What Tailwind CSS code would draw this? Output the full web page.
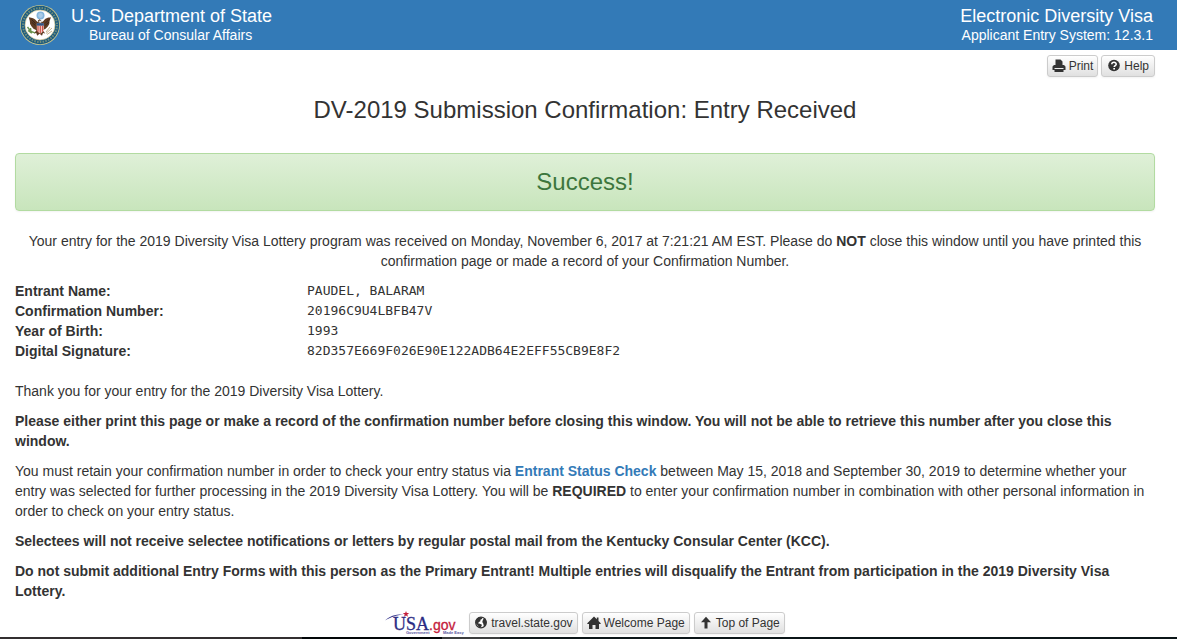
<!DOCTYPE html>
<html lang="en">
<head>
<meta charset="utf-8">
<meta name="viewport" content="width=device-width, initial-scale=1">
<title>DV-2019 Submission Confirmation</title>
<script src="https://cdn.jsdelivr.net/npm/@tailwindcss/browser@4"></script>
</head>
<body class="flex min-h-screen flex-col bg-white font-['Liberation_Sans',Arial,sans-serif] text-sm/5 text-[#333]">
<header id="top" class="flex h-[50px] justify-between bg-[#337ab7] pr-6 pl-5 text-white">
  <div class="flex gap-[11px]">
    <svg class="mt-[5px] size-10" viewBox="0 0 40 40" aria-hidden="true">
      <circle cx="20" cy="20" r="20" fill="#c9c68d"/>
      <circle cx="20" cy="20" r="19.2" fill="#1c5b80"/>
      <circle cx="20" cy="20" r="17" fill="none" stroke="#a9b078" stroke-width="2" stroke-dasharray="1.5 1.3" opacity=".6"/>
      <circle cx="20" cy="20" r="15" fill="#fff" stroke="#d5c98e" stroke-width=".7"/>
      <circle cx="20.500" cy="10.500" r="4" fill="#83b4dc"/>
      <circle cx="20.500" cy="10.500" r="2.400" fill="#a9cbe8"/>
      <path d="M18.600 17.500 16.500 16C14.500 13 12 13 8.800 12.300l1 3.700.3 3 1.500 2.500 1.900 2.200 3 1.600-2.600 3.200 2.300-.4 1 2.700 2.400-2 2.400 2 1-2.700 2.300.4-2.700-3.200 3-1.600 2.200-2.200 1.500-2.500.3-3 1.400-3.700c-3.200.500-5.600.700-7.500 3.700l-2.100 1.500-.2-2-1.600-1.300-1.700 1.300z" fill="#5f3c24"/>
      <path d="m11.500 14.500 4 4M11.600 17l3.800 3.500M29 14.500l-4 4M29 17l-3.800 3.500" stroke="#35221a" stroke-width=".9"/>
      <path d="M19 15.700h2.400l-.4 2h-1.600z" fill="#eee"/>
      <path d="M16.800 18.500h7v5c0 2.600-1.500 4-3.500 5-2-1-3.500-2.400-3.500-5z" fill="#f2c7bd"/>
      <path d="M16.800 18.200h7v2.500h-7z" fill="#2f5486"/>
      <path d="M18 20.700v6M20.300 20.700v7.500M22.600 20.700v6" stroke="#cc4d45" stroke-width="1.100"/>
      <path d="m7.500 22 3 4.200 4.500 1.600M8 25.500l3.800 2.700M10.500 23l.5 4" fill="none" stroke="#69924c" stroke-width="1.400"/>
      <path d="m26 28.500 6-5.500M27 29.500l5-3.500M26 27l4-5" stroke="#b6a071" stroke-width=".8"/>
    </svg>
    <div class="flex flex-col pt-1.5">
      <span class="text-lg/5">U.S. Department of State</span>
      <span class="pl-[18px] text-sm/[18px]">Bureau of Consular Affairs</span>
    </div>
  </div>
  <div class="flex flex-col pt-1.5 text-right">
    <span class="text-lg/5">Electronic Diversity Visa</span>
    <span class="text-sm/[18px]">Applicant Entry System: 12.3.1</span>
  </div>
</header>

<main class="flex flex-1 flex-col pr-[22px] pl-[15px]">
  <div class="flex justify-end gap-[3px] pt-[5px]">
    <button type="button" class="flex h-[22px] items-center gap-[3px] rounded-[3px] border border-[#ccc] bg-linear-to-b from-white to-[#e0e0e0] px-1 text-xs/4 shadow-xs">
      <svg class="size-3.5" viewBox="0 0 14 14" fill="#333" aria-hidden="true"><path fill-rule="evenodd" d="M3.500.5h5L10.500 2.500V6H12l1.500 1.500V11h-2v2h-9v-2h-2V7.500L2 6h1.500zM4.500 1.500V6h5V3H8V1.500zM2.500 9v1h9V9z"/><path d="M4 1h4v2h2v3H4z"/></svg>
      Print
    </button>
    <button type="button" class="flex h-[22px] items-center gap-[3px] rounded-[3px] border border-[#ccc] bg-linear-to-b from-white to-[#e0e0e0] px-[5px] text-xs/4 shadow-xs">
      <svg class="size-3.5" viewBox="0 0 14 14" aria-hidden="true"><circle cx="7" cy="6.500" r="5.800" fill="#333"/><path d="M4.800 5.200C4.800 2.500 9.300 2.700 9.200 5.200 9.200 6.700 7.200 6.700 7.200 8.100" fill="none" stroke="#fff" stroke-width="1.600"/><path d="M6.300 9h1.700v1.600H6.300z" fill="#fff"/></svg>
      Help
    </button>
  </div>

  <h1 class="mt-5 text-center text-2xl/[26px]">DV-2019 Submission Confirmation: Entry Received</h1>

  <div role="status" class="mt-[30px] flex h-[58px] items-center justify-center rounded-sm border border-[#b2dba1] bg-linear-to-b from-[#dff0d8] to-[#c8e5bc] text-2xl/[26px] text-[#3c763d] shadow-xs">Success!</div>

  <p class="mt-5 text-center">Your entry for the 2019 Diversity Visa Lottery program was received on Monday, November 6, 2017 at 7:21:21 AM EST. Please do <strong>NOT</strong> close this window until you have printed this confirmation page or made a record of your Confirmation Number.</p>

  <dl class="mt-2.5 grid grid-cols-[292px_1fr]">
    <dt class="font-bold">Entrant Name:</dt><dd class="font-['DejaVu_Sans_Mono',monospace] text-[13px]/5">PAUDEL, BALARAM</dd>
    <dt class="font-bold">Confirmation Number:</dt><dd class="font-['DejaVu_Sans_Mono',monospace] text-[13px]/5">20196C9U4LBFB47V</dd>
    <dt class="font-bold">Year of Birth:</dt><dd class="font-['DejaVu_Sans_Mono',monospace] text-[13px]/5">1993</dd>
    <dt class="font-bold">Digital Signature:</dt><dd class="font-['DejaVu_Sans_Mono',monospace] text-[13px]/5">82D357E669F026E90E122ADB64E2EFF55CB9E8F2</dd>
  </dl>

  <div class="mt-5 flex flex-col gap-2.5">
    <p>Thank you for your entry for the 2019 Diversity Visa Lottery.</p>
    <p class="font-bold">Please either print this page or make a record of the confirmation number before closing this window. You will not be able to retrieve this number after you close this window.</p>
    <p>You must retain your confirmation number in order to check your entry status via <a href="#" class="font-bold text-[#337ab7]">Entrant Status Check</a> between May 15, 2018 and September 30, 2019 to determine whether your entry was selected for further processing in the 2019 Diversity Visa Lottery. You will be <strong>REQUIRED</strong> to enter your confirmation number in combination with other personal information in order to check on your entry status.</p>
    <p class="font-bold">Selectees will not receive selectee notifications or letters by regular postal mail from the Kentucky Consular Center (KCC).</p>
    <p class="font-bold">Do not submit additional Entry Forms with this person as the Primary Entrant! Multiple entries will disqualify the Entrant from participation in the 2019 Diversity Visa Lottery.</p>
  </div>

  <footer class="mt-2.5 flex items-start justify-center gap-1">
    <a href="#" class="block" aria-label="USA.gov, Government Made Easy">
      <svg class="h-[25px] w-20" viewBox="0 0 80 25" aria-hidden="true">
        <path d="M0 9.500C5 4.500 11 3.200 19 3.500 11 4.300 6 6 0 9.500z" fill="#31318a"/>
        <path d="m21 0 .8 2 2.400.1-1.900 1.300.7 2.300-2-1.300-2 1.300.7-2.300-1.900-1.300 2.400-.1z" fill="#c4203c"/>
        <text x="8" y="19" font-family="Liberation Serif, serif" font-size="18" fill="#2b2b83" stroke="#2b2b83" stroke-width=".3">USA</text>
        <text x="44" y="19" font-family="Liberation Sans, sans-serif" font-size="14" fill="#c4203c" stroke="#c4203c" stroke-width=".3">.gov</text>
        <text x="21" y="23" font-family="Liberation Sans, sans-serif" font-size="4" font-weight="bold" fill="#5656a0">Government</text>
        <text x="58" y="23" font-family="Liberation Sans, sans-serif" font-size="4" font-weight="bold" fill="#5656a0">Made Easy</text>
      </svg>
    </a>
    <a href="#" class="flex h-[22px] items-center gap-[3px] rounded-[3px] border border-[#ccc] bg-linear-to-b from-white to-[#e0e0e0] px-1 text-xs/4 shadow-xs mt-px">
      <svg class="size-3.5" viewBox="0 0 14 14" aria-hidden="true"><circle cx="7" cy="6.500" r="5.300" fill="#fff" stroke="#333" stroke-width="1.200"/><path d="m1.700 4 3-2.800 4 .3-.8 1.500-1.800.9.6 1.200-1.700.8-1 1.400 1.800.5 2.200 1-.8 2-1.700 1L3 8.500 1.400 7zM9 3.500 11 2l1.700 4-.8 3-2 1.500-.7-3L8.300 6z" fill="#333"/></svg>
      travel.state.gov
    </a>
    <a href="#" class="flex h-[22px] items-center gap-[3px] rounded-[3px] border border-[#ccc] bg-linear-to-b from-white to-[#e0e0e0] px-1 text-xs/4 shadow-xs mt-px">
      <svg class="size-3.5" viewBox="0 0 14 14" fill="#333" aria-hidden="true"><path d="m7 .5 2.800 2.800V1.500h1.700V5L13.700 7.200V8H12v5H8.500V9h-3v4H2V8H.3v-.8z"/></svg>
      Welcome Page
    </a>
    <a href="#top" class="flex h-[22px] items-center gap-[3px] rounded-[3px] border border-[#ccc] bg-linear-to-b from-white to-[#e0e0e0] px-1 text-xs/4 shadow-xs mt-px">
      <svg class="size-3.5" viewBox="0 0 14 14" fill="#333" aria-hidden="true"><path d="m7 .8 5 5.500H8.500V12.500h-3V6.300H2z"/></svg>
      Top of Page
    </a>
  </footer>
</main>
<div class="flex h-0.5 bg-[#0b1518]"><div class="w-[302px] bg-[#332f30]"></div><div class="w-[140px] bg-[#020608]"></div><div class="w-[58px] bg-[#3b3d3e]"></div></div>
</body>
</html>
